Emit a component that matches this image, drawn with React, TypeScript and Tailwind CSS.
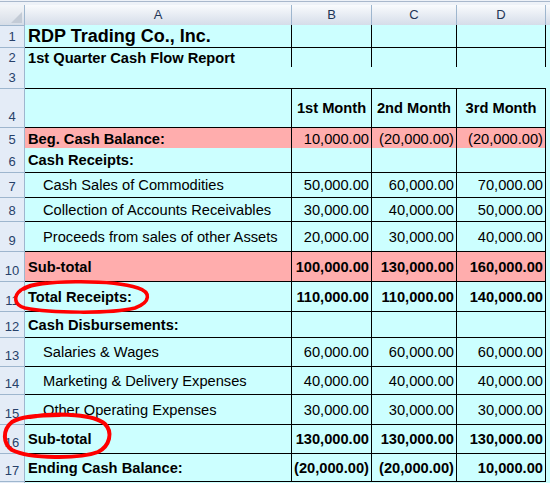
import React from "react";

type Row = {
  n: number;
  h: number;
  label?: string;
  kind?: "title" | "subtitle" | "merged" | "head" | "bold" | "item";
  pink?: boolean;
  vals?: string[];
  boldVals?: boolean;
};

const ROWS: Row[] = [
  { n: 1, h: 23, label: "RDP Trading Co., Inc.", kind: "title", vals: ["", "", ""] },
  { n: 2, h: 19, label: "1st Quarter Cash Flow Report", kind: "subtitle", vals: ["", "", ""] },
  { n: 3, h: 22, kind: "merged" },
  { n: 4, h: 39, label: "", kind: "head", vals: ["1st Month", "2nd Month", "3rd Month"] },
  { n: 5, h: 20, label: "Beg. Cash Balance:", kind: "bold", pink: true, vals: ["10,000.00", "(20,000.00)", "(20,000.00)"] },
  { n: 6, h: 25, label: "Cash Receipts:", kind: "bold", vals: ["", "", ""] },
  { n: 7, h: 25, label: "Cash Sales of Commodities", kind: "item", vals: ["50,000.00", "60,000.00", "70,000.00"] },
  { n: 8, h: 24, label: "Collection of Accounts Receivables", kind: "item", vals: ["30,000.00", "40,000.00", "50,000.00"] },
  { n: 9, h: 30, label: "Proceeds from sales of other Assets", kind: "item", vals: ["20,000.00", "30,000.00", "40,000.00"] },
  { n: 10, h: 30, label: "Sub-total", kind: "bold", pink: true, vals: ["100,000.00", "130,000.00", "160,000.00"], boldVals: true },
  { n: 11, h: 30, label: "Total Receipts:", kind: "bold", vals: ["110,000.00", "110,000.00", "140,000.00"], boldVals: true },
  { n: 12, h: 26, label: "Cash Disbursements:", kind: "bold", vals: ["", "", ""] },
  { n: 13, h: 29, label: "Salaries & Wages", kind: "item", vals: ["60,000.00", "60,000.00", "60,000.00"] },
  { n: 14, h: 28, label: "Marketing & Delivery Expenses", kind: "item", vals: ["40,000.00", "40,000.00", "40,000.00"] },
  { n: 15, h: 30, label: "Other Operating Expenses", kind: "item", vals: ["30,000.00", "30,000.00", "30,000.00"] },
  { n: 16, h: 29, label: "Sub-total", kind: "bold", vals: ["130,000.00", "130,000.00", "130,000.00"], boldVals: true },
  { n: 17, h: 28, label: "Ending Cash Balance:", kind: "bold", vals: ["(20,000.00)", "(20,000.00)", "10,000.00"], boldVals: true },
];

const COLS = "grid grid-cols-[25px_267px_80px_85px_89px_1fr]";

function RowHeader({ n }: { n?: number }) {
  return (
    <div className="flex items-end justify-center border-r border-b border-[#9eb6ce] bg-[#e4ecf7] pb-[1px] text-[13px] text-[#27416a]">
      {n}
    </div>
  );
}

function SheetRow({ row }: { row: Row }) {
  const bg = row.pink ? "bg-[#ffadad]" : "bg-[#ccffff]";

  if (row.kind === "merged") {
    return (
      <div className={COLS} style={{ height: row.h }}>
        <RowHeader n={row.n} />
        <div className="col-span-4 border-b border-black bg-[#ccffff]" />
        <div className="bg-[#ccffff]" />
      </div>
    );
  }

  let labelCls = "font-bold text-[14.67px]";
  if (row.kind === "title") labelCls = "font-bold text-[18px]";
  if (row.kind === "item") labelCls = "pl-[15px] text-[14.67px]";

  return (
    <div className={COLS} style={{ height: row.h }}>
      <RowHeader n={row.n} />
      <div className={`flex items-center overflow-hidden whitespace-nowrap border-r border-b border-black pl-[3px] ${bg}`}>
        <span className={labelCls}>{row.label}</span>
      </div>
      {row.vals?.map((v, i) => (
        <div
          key={i}
          className={`flex items-center whitespace-nowrap border-r border-b border-black text-[14.67px] ${bg} ${
            row.kind === "head" ? "justify-center font-bold" : "justify-end pr-[2px]"
          } ${row.boldVals ? "font-bold" : ""}`}
        >
          {v}
        </div>
      ))}
      <div className="bg-[#ccffff]" />
    </div>
  );
}

export default function App() {
  return (
    <div className="relative h-[483px] w-[550px] overflow-hidden bg-[#ccffff] font-['Liberation_Sans',Arial,sans-serif] text-black">
      {/* top strip */}
      <div className="flex h-[5px] bg-[#eef2f8]">
        <div className="mt-[1px] h-[1px] w-full bg-[#a9b8cc]" />
      </div>

      {/* column headers */}
      <div className={`${COLS} h-[20px] text-[13px] text-[#1f3556]`}>
        <div className="relative border-r border-b border-[#9eb6ce] bg-gradient-to-b from-[#f3f5f8] to-[#d6dde7]">
          <svg className="absolute right-[2px] bottom-[2px]" width="11" height="11" viewBox="0 0 11 11">
            <polygon points="11,0 11,11 0,11" fill="#c3cbd6" />
          </svg>
        </div>
        {["A", "B", "C", "D"].map((c) => (
          <div
            key={c}
            className="flex items-center justify-center border-r border-b border-[#9eb6ce] bg-gradient-to-b from-[#f9fbfd] to-[#d5dde9]"
          >
            {c}
          </div>
        ))}
        <div className="border-b border-[#9eb6ce] bg-gradient-to-b from-[#f9fbfd] to-[#d5dde9]" />
      </div>

      {ROWS.map((r) => (
        <SheetRow key={r.n} row={r} />
      ))}

      {/* bit of row 18 peeking in at the bottom */}
      <div className={`${COLS} h-[10px]`}>
        <div className="border-r border-[#9eb6ce] bg-[#e4ecf7]" />
        <div className="col-span-5 bg-[#ccffff]" />
      </div>

      {/* red hand-drawn circles */}
      <svg className="pointer-events-none absolute inset-0" width="550" height="483" viewBox="0 0 550 483">
        <path
          d="M 24 289 C 38 280, 110 279, 138 288 C 151 292, 151 302, 135 308 C 110 314, 50 313, 25 308 C 14 305, 13 296, 21 290 C 26 286, 34 284, 46 283"
          fill="none"
          stroke="#ff0000"
          strokeWidth="3.5"
          strokeLinecap="round"
        />
        <path
          d="M 30 417 C 60 412, 95 415, 105 424 C 113 432, 110 446, 98 452 C 80 459, 30 459, 12 450 C 3 444, 2 430, 12 422 C 20 417, 35 415, 60 415"
          fill="none"
          stroke="#ff0000"
          strokeWidth="4"
          strokeLinecap="round"
        />
      </svg>
    </div>
  );
}
